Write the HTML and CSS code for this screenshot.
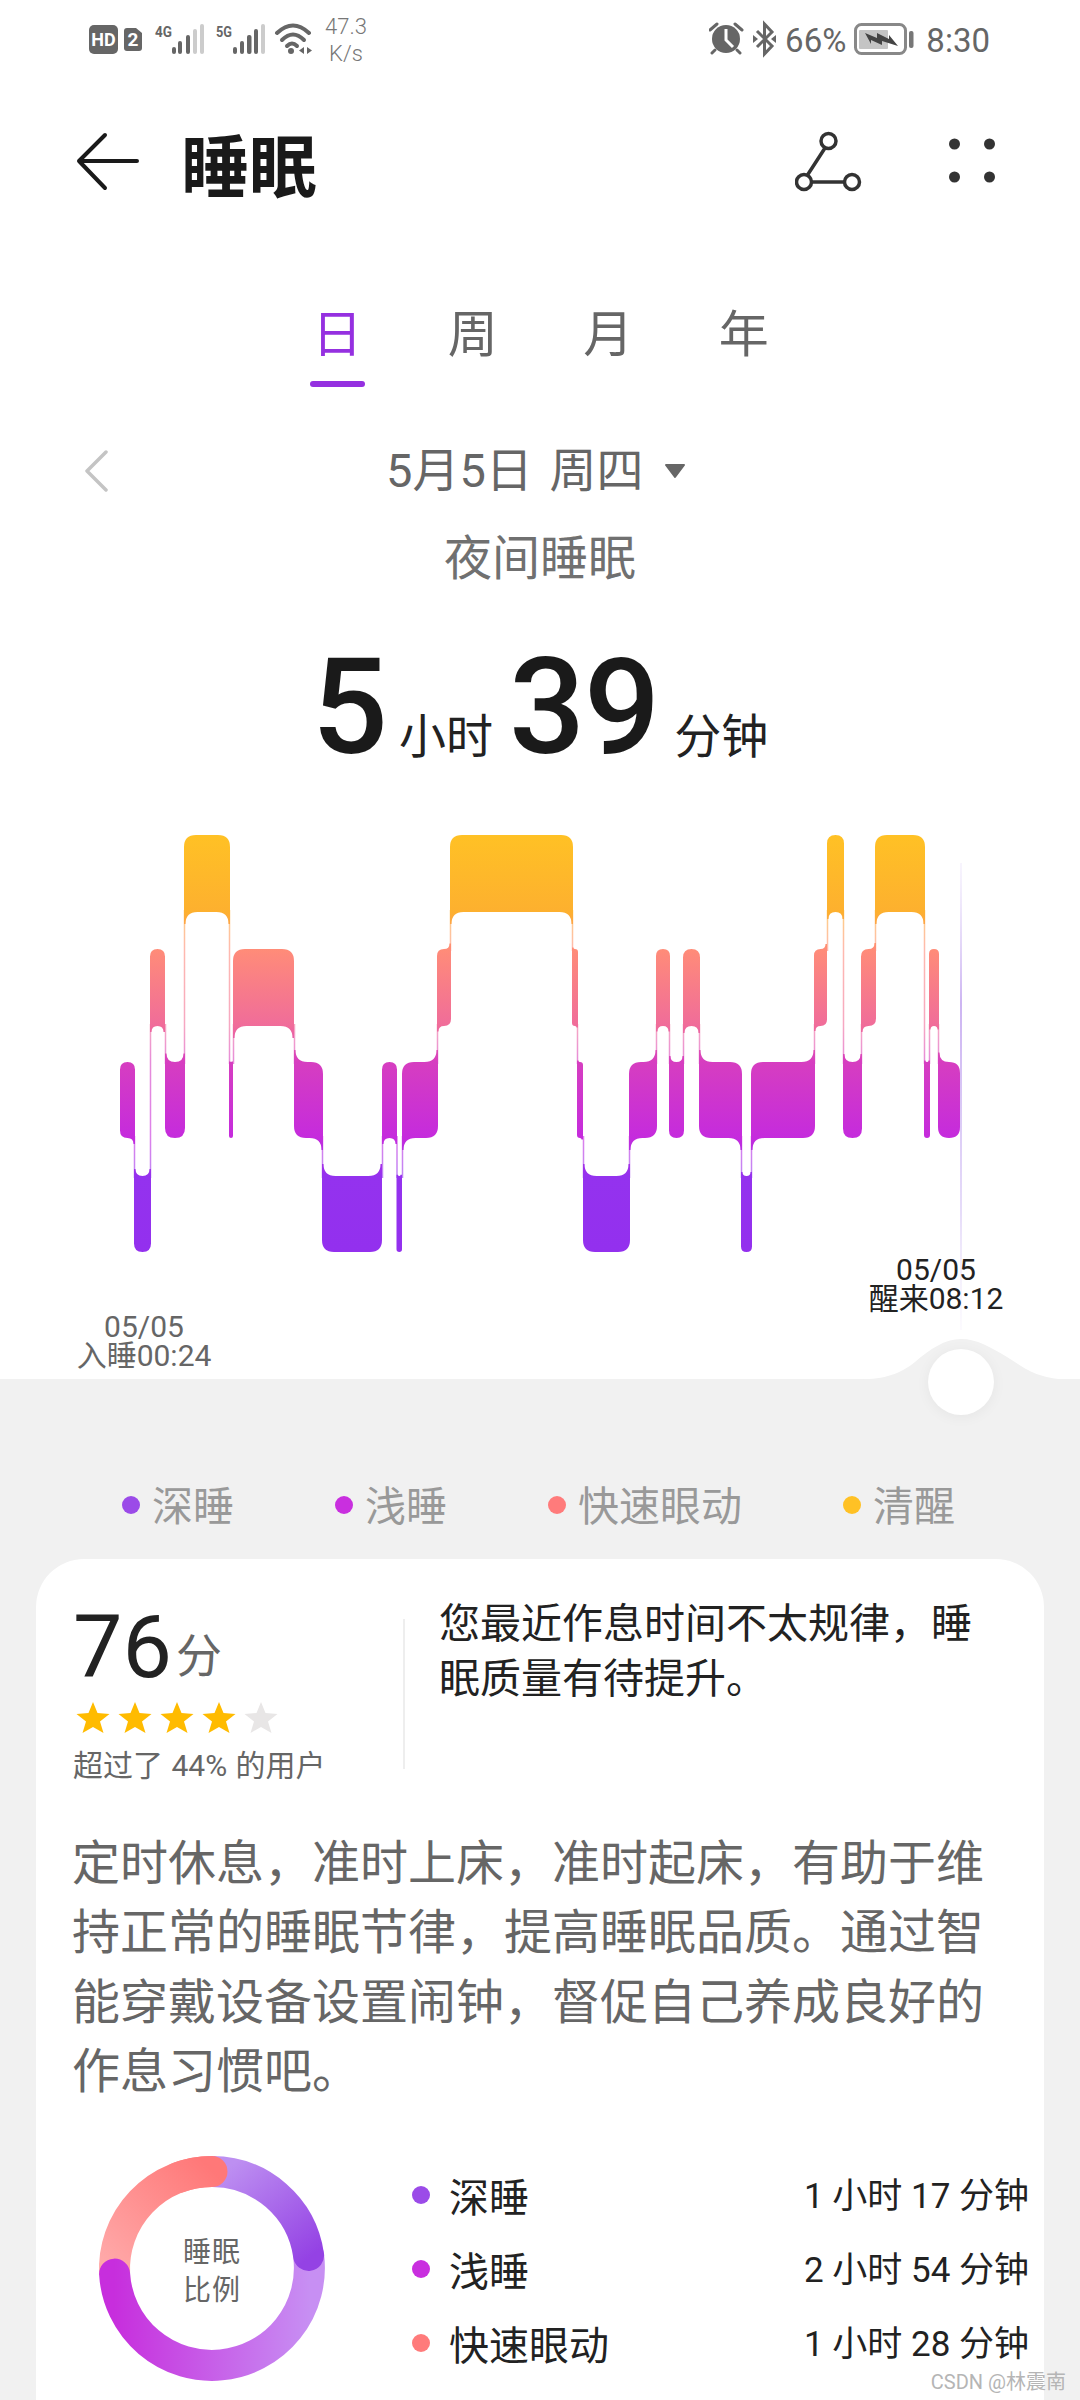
FILE: index.html
```html
<!DOCTYPE html>
<html lang="zh-CN">
<head>
<meta charset="utf-8">
<title>睡眠</title>
<link rel="stylesheet" href="styles.css">
</head>
<body>
<div class="page">
  <header class="status">
    <div class="status-group">
      <svg class="status-left-icons" viewBox="89 20 224 38" width="224" height="38">
        <rect x="89" y="25" width="29" height="29" rx="5" fill="#666"/>
        <text x="103.5" y="46" class="ic-text ic-hd" text-anchor="middle">HD</text>
        <path d="M127 28H136L142 33V48Q142 51 139 51H127Q124 51 124 48V31Q124 28 127 28Z" fill="#666"/>
        <text x="133" y="46" class="ic-text ic-sim" text-anchor="middle">2</text>
        <text x="155" y="37" class="ic-net" textLength="17" lengthAdjust="spacingAndGlyphs">4G</text>
        <g fill="#666">
          <rect x="172" y="47" width="4" height="7" rx="2"/><rect x="178" y="41" width="4" height="13" rx="2"/><rect x="186" y="35" width="4" height="19" rx="2"/>
        </g>
        <g fill="#ccc">
          <rect x="193" y="29" width="4" height="25" rx="2"/><rect x="200" y="24" width="4" height="30" rx="2"/>
        </g>
        <text x="216" y="37" class="ic-net" textLength="16" lengthAdjust="spacingAndGlyphs">5G</text>
        <g fill="#666">
          <rect x="233" y="47" width="4" height="7" rx="2"/><rect x="240" y="41" width="4" height="13" rx="2"/><rect x="247" y="35" width="4.5" height="19" rx="2"/><rect x="254" y="29" width="4" height="25" rx="2"/>
        </g>
        <rect x="261" y="24" width="4" height="30" rx="2" fill="#ccc"/>
        <g fill="none" stroke="#666" stroke-width="4" stroke-linecap="round">
          <path d="M277 33Q293 18 309 33"/><path d="M282 40Q293 29 304 40"/><path d="M287 46Q292 41 297 46"/>
        </g>
        <circle cx="291" cy="51" r="3" fill="#666"/>
        <path d="M304 47V54L299 50.5ZM307 47V54L312 50.5Z" fill="#666"/>
      </svg>
      <div class="speed">47.3<br>K/s</div>
    </div>
    <div class="status-group">
      <svg class="status-alarm" viewBox="708 20 68 38" width="68" height="38">
        <circle cx="725" cy="39" r="14" fill="#666"/>
        <path d="M725 29V40L732 47" fill="none" stroke="#fff" stroke-width="3"/>
        <path d="M709 30L716 24M741 30L734 24M714 50L711 53M736 50L739 53" stroke="#666" stroke-width="3" stroke-linecap="round"/>
        <path d="M756 31L771 46L763.5 54V24L771 32L756 47" fill="none" stroke="#666" stroke-width="3"/>
        <path d="M752 35L757 39L752 43ZM775 35L770 39L775 43Z" fill="#666"/>
      </svg>
      <span class="status-text batt-pct">66%</span>
      <svg class="status-batt" viewBox="854 20 60 38" width="60" height="38">
        <rect x="855.5" y="24.5" width="50" height="29" rx="6" fill="#fff" stroke="#888" stroke-width="3"/>
        <rect x="859" y="30" width="29" height="19" rx="1" fill="#c4c4c4"/>
        <path d="M865 33L877 38V33L889 39V35L898 46L882 41V45L871 40V44Z" fill="#444"/>
        <rect x="909" y="31" width="4.5" height="17" rx="2" fill="#777"/>
      </svg>
      <span class="status-text clock">8:30</span>
    </div>
  </header>

  <nav class="appbar">
    <svg class="back" viewBox="76 130 64 62" width="64" height="62">
      <path d="M137 161H79M105 135L79 161L105 188" fill="none" stroke="#1a1a1a" stroke-width="4" stroke-linecap="round" stroke-linejoin="round"/>
    </svg>
    <h1 class="title">睡眠</h1>
    <svg class="share" viewBox="795 130 68 62" width="68" height="62">
      <g fill="none" stroke="#333" stroke-width="3.5">
        <circle cx="828.5" cy="141" r="7.5"/><circle cx="804" cy="182" r="7.5"/><circle cx="852" cy="182" r="7.5"/>
        <path d="M825 148L807.5 175M811.5 182H844.5"/>
      </g>
    </svg>
    <svg class="more" viewBox="949 139 46 46" width="46" height="46">
      <g fill="#333">
        <circle cx="954.5" cy="145" r="5.5"/><circle cx="989.5" cy="145" r="5.5"/><circle cx="954.5" cy="178" r="5.5"/><circle cx="989.5" cy="178" r="5.5"/>
      </g>
    </svg>
  </nav>

  <div class="tabs">
    <span class="tab tab-active">日</span>
    <span class="tab">周</span>
    <span class="tab">月</span>
    <span class="tab">年</span>
  </div>

  <div class="date-row">
    <svg class="chevron" viewBox="0 0 24 44" width="24" height="44">
      <path d="M22 3L3 22L22 41" fill="none" stroke="#c4c4c4" stroke-width="3.5" stroke-linecap="round" stroke-linejoin="round"/>
    </svg>
    <span class="date-text">5月5日 周四</span>
    <svg class="caret" viewBox="0 0 22 16" width="22" height="16">
      <path d="M2 2H20L11 14Z" fill="#666" stroke="#666" stroke-width="2" stroke-linejoin="round"/>
    </svg>
  </div>
  <div class="subtitle">夜间睡眠</div>

  <div class="duration">
    <span class="dur-num">5</span><span class="dur-unit dur-unit-h">小时</span><span class="dur-num dur-num-m">39</span><span class="dur-unit dur-unit-m">分钟</span>
  </div>

  <section class="chart">
    <svg class="chart-svg" viewBox="0 778 1080 680" width="1080" height="680">
      <defs>
        <linearGradient id="sleepGrad" gradientUnits="userSpaceOnUse" x1="0" y1="835" x2="0" y2="1252">
          <stop offset="0" stop-color="#FFC125"/>
          <stop offset=".185" stop-color="#FDB02F"/>
          <stop offset=".273" stop-color="#FF8C78"/>
          <stop offset=".458" stop-color="#F06C9A"/>
          <stop offset=".544" stop-color="#D63EC0"/>
          <stop offset=".726" stop-color="#C52BDD"/>
          <stop offset=".818" stop-color="#9432EE"/>
          <stop offset="1" stop-color="#9330EE"/>
        </linearGradient>
        <linearGradient id="cursorGrad" gradientUnits="userSpaceOnUse" x1="0" y1="863" x2="0" y2="1330">
          <stop offset="0" stop-color="#E6DCF9" stop-opacity=".3"/>
          <stop offset=".3" stop-color="#CDB5F2"/>
          <stop offset=".75" stop-color="#E6DCF9"/>
          <stop offset="1" stop-color="#F4EFFC" stop-opacity=".3"/>
        </linearGradient>
      </defs>
      <rect x="960" y="863" width="2" height="467" fill="url(#cursorGrad)"/>
      <path id="sleep-links" fill="url(#sleepGrad)" opacity=".6"/>
      <path id="sleep-bars" fill="url(#sleepGrad)"/>
      <path d="M860 1379.5C885 1379 900 1374 915 1362C930 1349 945 1339 961 1339C977 1339 990 1347 1007 1357C1022 1366 1035 1379 1068 1379.5Z" fill="#f1f1f1"/>
    </svg>
    <div class="chart-label chart-label-start">05/05<br>入睡00:24</div>
    <div class="chart-label chart-label-end">05/05<br>醒来08:12</div>
    <div class="knob"></div>
  </section>

  <main class="sheet">
    <ul class="legend">
      <li class="legend-item"><i class="dot dot-deep"></i>深睡</li>
      <li class="legend-item"><i class="dot dot-light"></i>浅睡</li>
      <li class="legend-item"><i class="dot dot-rem"></i>快速眼动</li>
      <li class="legend-item"><i class="dot dot-awake"></i>清醒</li>
    </ul>

    <article class="card">
      <div class="summary">
        <div class="score-col">
          <div class="score"><span class="score-num">76</span><span class="score-unit">分</span></div>
          <svg class="stars" viewBox="0 0 202 31" width="202" height="31">
            <defs><path id="star" d="M17 0L21.5 11L33.5 12L24 19.5L27.5 31L17 25L6.500 31L10 19.5L.5 12L12.5 11Z"/></defs>
            <use href="#star" fill="#FFBB00"/>
            <use href="#star" x="42" fill="#FFBB00"/>
            <use href="#star" x="84" fill="#FFBB00"/>
            <use href="#star" x="126" fill="#FFBB00"/>
            <use href="#star" x="168" fill="#E8E6E6"/>
          </svg>
          <div class="score-note">超过了 44% 的用户</div>
        </div>
        <div class="divider"></div>
        <p class="verdict">您最近作息时间不太规律，睡眠质量有待提升。</p>
      </div>

      <p class="advice">定时休息，准时上床，准时起床，有助于维持正常的睡眠节律，提高睡眠品质。通过智能穿戴设备设置闹钟，督促自己养成良好的作息习惯吧。</p>

      <div class="ratio">
        <svg class="donut" viewBox="92 2149 240 240" width="240" height="240">
          <defs>
            <linearGradient id="dCoral" gradientUnits="userSpaceOnUse" x1="115" y1="2270" x2="212" y2="2170">
              <stop offset="0" stop-color="#FFA8A8"/><stop offset="1" stop-color="#FF7878"/>
            </linearGradient>
            <linearGradient id="dLight" gradientUnits="userSpaceOnUse" x1="310" y1="2270" x2="114" y2="2270">
              <stop offset="0" stop-color="#C78FF3"/><stop offset="1" stop-color="#C72EDD"/>
            </linearGradient>
            <linearGradient id="dDeep" gradientUnits="userSpaceOnUse" x1="225" y1="2170" x2="300" y2="2265">
              <stop offset="0" stop-color="#BD8FF1"/><stop offset="1" stop-color="#9442E4"/>
            </linearGradient>
          </defs>
          <g fill="none" stroke-width="31">
            <path d="M114.6 2274.1A97.5 97.5 0 0 1 212 2171.5" stroke="url(#dCoral)"/>
            <path d="M308.600 2255.4A97.5 97.5 0 1 1 114.6 2274.1" stroke="url(#dLight)" stroke-linecap="round"/>
            <path d="M212 2171.5A97.5 97.5 0 0 1 308.600 2255.4" stroke="url(#dDeep)" stroke-linecap="round"/>
            <path d="M178.7 2177.4A97.5 97.5 0 0 1 212 2171.5" stroke="url(#dCoral)" stroke-linecap="round"/>
          </g>
          <text class="donut-text" x="212" y="2262" text-anchor="middle">睡眠</text>
          <text class="donut-text" x="212" y="2300" text-anchor="middle">比例</text>
        </svg>
        <ul class="ratio-list">
          <li class="ratio-row"><span class="ratio-name"><i class="dot dot-deep"></i>深睡</span><span class="ratio-time">1 小时 17 分钟</span></li>
          <li class="ratio-row"><span class="ratio-name"><i class="dot dot-light"></i>浅睡</span><span class="ratio-time">2 小时 54 分钟</span></li>
          <li class="ratio-row"><span class="ratio-name"><i class="dot dot-rem"></i>快速眼动</span><span class="ratio-time">1 小时 28 分钟</span></li>
        </ul>
      </div>
    </article>
  </main>

  <div class="watermark">CSDN @林震南</div>
</div>
<script src="chart.js"></script>
</body>
</html>
```

FILE: styles.css
```css
* { box-sizing: border-box; }
html, body { margin: 0; padding: 0; background: #fff; }
body { font-family: Roboto, "Noto Sans CJK SC", sans-serif; color: #222; }
ul { list-style: none; margin: 0; padding: 0; }
p, h1 { margin: 0; }
svg { display: block; flex: none; }

.page { position: relative; width: 1080px; height: 2400px; overflow: hidden; background: #fff; }

/* status bar */
.status { display: flex; justify-content: space-between; align-items: center; height: 78px; padding: 0 90px 0 89px; color: #666; }
.status-group { display: flex; align-items: center; }
.speed { width: 48px; margin-left: 9px; padding-top: 2px; font-size: 22px; line-height: 27px; text-align: center; color: #777; font-weight: 300; }
.status-text { padding-top: 4px; font-size: 33px; line-height: 38px; color: #666; }
.batt-pct { margin-left: 8px; }
.status-batt { margin-left: 8px; }
.clock { margin-left: 12px; }
.ic-text { font-family: Roboto, sans-serif; font-weight: 700; fill: #fff; }
.ic-hd { font-size: 18px; }
.ic-sim { font-size: 19px; }
.ic-net { font-family: Roboto, sans-serif; font-weight: 700; font-size: 15px; fill: #666; }

/* app bar */
.appbar { display: flex; align-items: center; height: 162px; margin-top: 2px; padding: 0 85px 0 76px; }
.title { margin: 15px 0 0 41px; font-size: 68px; line-height: 90px; font-weight: 700; color: #1a1a1a; }
.share { margin-left: auto; }
.more { margin-left: 86px; }

/* tabs */
.tabs { display: flex; justify-content: center; gap: 85.5px; margin-top: 58px; padding-left: 1px; }
.tab { display: flex; flex-direction: column; align-items: center; width: 50px; font-size: 50px; line-height: 70px; color: #666; }
.tab::after { content: ""; display: block; flex: none; width: 55px; height: 6px; margin-top: 11px; border-radius: 3px; background: transparent; }
.tab-active { color: #9530E0; }
.tab-active::after { background: #9530E0; }

/* date */
.date-row { display: flex; align-items: center; height: 60px; margin-top: 54px; padding-left: 84px; }
.date-text { margin-left: 278px; font-size: 47px; line-height: 60px; color: #666; word-spacing: 5px; }
.caret { margin-left: 20px; }
.subtitle { height: 60px; margin-top: 28px; font-size: 48px; line-height: 60px; text-align: center; color: #707070; }

/* duration */
.duration { display: flex; justify-content: center; align-items: baseline; height: 140px; margin-top: 49px; color: #1a1a1a; }
.dur-num { font-size: 134px; line-height: 140px; font-weight: 500; letter-spacing: -1px; }
.dur-unit { font-size: 47px; line-height: 60px; color: #222; }
.dur-unit-h { margin: 0 16px 0 12px; }
.dur-unit-m { margin-left: 15px; }

/* chart */
.chart { position: relative; height: 601px; }
.chart-svg { position: absolute; left: 0; top: 0; }
.chart-label { position: absolute; width: 200px; font-size: 30px; line-height: 29px; text-align: center; }
.chart-label-start { left: 44px; top: 534px; color: #666; }
.chart-label-end { left: 836px; top: 477px; color: #222; }
.knob { position: absolute; left: 928px; top: 571px; width: 66px; height: 66px; border-radius: 50%; background: #fff; box-shadow: 0 2px 14px rgba(0, 0, 0, .05); }

/* sheet */
.sheet { height: 1021px; padding-top: 96px; background: #f1f1f1; overflow: hidden; }
.legend { display: flex; gap: 101px; height: 60px; padding-left: 122px; }
.legend-item { display: flex; align-items: center; padding-top: 4px; font-size: 41px; line-height: 60px; color: #999; }
.dot { display: block; flex: none; width: 18px; height: 18px; margin-right: 12px; border-radius: 50%; }
.legend-item .dot { margin-top: -4px; }
.dot-deep { background: #9B4BE8; }
.dot-light { background: #C92FDF; }
.dot-rem { background: #FF7B7B; }
.dot-awake { background: #FFC125; }

/* card */
.card { height: 900px; margin: 24px 36px 0; padding: 38px 15px 0 37px; border-radius: 48px; background: #fff; }
.summary { display: flex; align-items: flex-start; }
.score-col { width: 330px; flex: none; }
.score { display: flex; align-items: flex-start; height: 100px; }
.score-num { font-size: 88px; line-height: 100px; color: #222; }
.score-unit { margin: 34px 0 0 4px; font-size: 46px; line-height: 50px; color: #666; }
.stars { margin-top: 5px; margin-left: 3px; }
.score-note { margin-top: 13px; font-size: 30px; line-height: 40px; word-spacing: 1px; white-space: nowrap; color: #666; }
.divider { flex: none; width: 1.5px; height: 150px; margin-top: 22px; background: #eee; }
.verdict { width: 545px; margin-left: 34.5px; font-size: 41px; line-height: 55px; color: #222; }
.advice { width: 930px; margin: 43px 0 0 -1px; font-size: 48px; line-height: 69.3px; color: #666; }

/* ratio */
.ratio { display: flex; align-items: flex-start; }
.donut { margin: 43px 0 0 19px; }
.donut-text { font-family: "Noto Sans CJK SC", sans-serif; font-size: 28px; letter-spacing: 1px; fill: #666; }
.ratio-list { flex: 1; margin: 52px 0 0 80px; }
.ratio-row { display: flex; justify-content: space-between; align-items: center; height: 74px; }
.ratio-name { display: flex; align-items: center; font-size: 40px; color: #222; }
.ratio-name .dot { margin-right: 19px; }
.ratio-time { margin-bottom: 5px; font-size: 35px; color: #222; white-space: nowrap; }

.watermark { position: absolute; right: 14px; bottom: 5px; font-size: 20px; line-height: 26px; color: #b5b5b5; }
```

FILE: chart.js
```js
// Sleep stages as [level, startX, endX]; levels run from awake (top) to deep sleep (bottom).
var LEVELS = [[835, 912], [949, 1026], [1062, 1138], [1176, 1252]];
var SEGMENTS = [
  [2, 120, 135], [3, 134, 151], [1, 150, 165], [2, 165, 185], [0, 184, 230], [2, 229, 233],
  [1, 233, 294], [2, 294, 323], [3, 322, 382], [2, 382, 397], [3, 396.5, 402], [2, 402, 438],
  [1, 437, 451], [0, 450, 573], [1, 572, 578], [2, 577, 583], [3, 583, 630], [2, 629, 657],
  [1, 656, 670], [2, 669, 684], [1, 683, 700], [2, 699, 742], [3, 741, 752], [2, 751, 815],
  [1, 814, 827], [0, 827, 844], [2, 843, 862], [1, 861, 876], [0, 875, 925], [2, 924, 930],
  [1, 929, 939], [2, 938, 960]
];
var EDGE = 1.5;

function segmentPath(i) {
  var s = SEGMENTS[i];
  var x0 = s[1], x1 = s[2];
  var t = LEVELS[s[0]][0], b = LEVELS[s[0]][1];
  var prev = i > 0 ? SEGMENTS[i - 1][0] : s[0];
  var next = i < SEGMENTS.length - 1 ? SEGMENTS[i + 1][0] : s[0];
  var width = x1 - x0;
  var r = Math.min(12, width / 2);
  var rc = Math.min(12, Math.max(width / 2 - EDGE, 0.5));
  var d = "";
  d += prev < s[0]
    ? "M" + x0 + " " + (t - rc) + "H" + (x0 + EDGE) + "Q" + (x0 + EDGE) + " " + t + " " + (x0 + EDGE + rc) + " " + t
    : "M" + x0 + " " + (t + r) + "Q" + x0 + " " + t + " " + (x0 + r) + " " + t;
  d += next < s[0]
    ? "H" + (x1 - EDGE - rc) + "Q" + (x1 - EDGE) + " " + t + " " + (x1 - EDGE) + " " + (t - rc) + "H" + x1
    : "H" + (x1 - r) + "Q" + x1 + " " + t + " " + x1 + " " + (t + r);
  d += next > s[0]
    ? "V" + (b + rc) + "H" + (x1 - EDGE) + "Q" + (x1 - EDGE) + " " + b + " " + (x1 - EDGE - rc) + " " + b
    : "V" + (b - r) + "Q" + x1 + " " + b + " " + (x1 - r) + " " + b;
  d += prev > s[0]
    ? "H" + (x0 + EDGE + rc) + "Q" + (x0 + EDGE) + " " + b + " " + (x0 + EDGE) + " " + (b + rc) + "H" + x0
    : "H" + (x0 + r) + "Q" + x0 + " " + b + " " + x0 + " " + (b - r);
  return d + "Z";
}

function linkPath(i) {
  var a = SEGMENTS[i], c = SEGMENTS[i + 1];
  var upper = a[0] < c[0] ? a : c, lower = a[0] < c[0] ? c : a;
  var left = Math.min(a[2], c[1]) - 0.25;
  var right = Math.max(a[2], c[1]) + 0.25;
  if (right - left < EDGE) right = left + EDGE;
  var top = LEVELS[upper[0]][1] - 2;
  var bottom = LEVELS[lower[0]][0] + 2;
  return "M" + left + " " + top + "H" + right + "V" + bottom + "H" + left + "Z";
}

var bars = "", links = "";
for (var i = 0; i < SEGMENTS.length; i++) {
  bars += segmentPath(i);
  if (i < SEGMENTS.length - 1) links += linkPath(i);
}
document.getElementById("sleep-bars").setAttribute("d", bars);
document.getElementById("sleep-links").setAttribute("d", links);
```
